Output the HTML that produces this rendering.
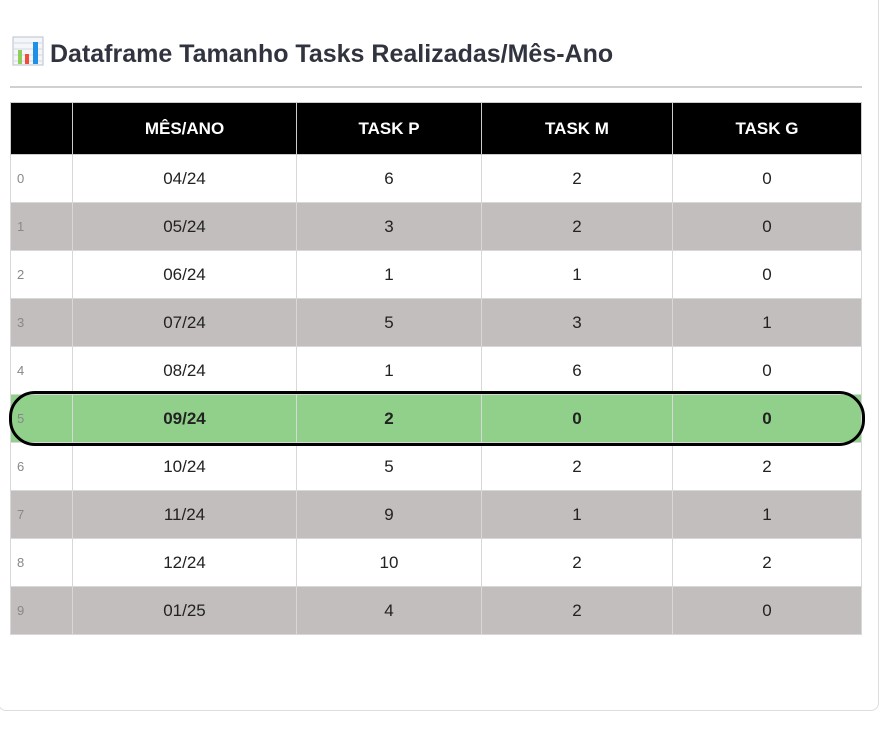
<!DOCTYPE html>
<html><head><style>
body{margin:0;background:#fff;width:892px;height:729px;overflow:hidden;font-family:"Liberation Sans",sans-serif;position:relative}
.card{position:absolute;left:-2px;top:-10px;width:879px;height:719px;border:1px solid #ddd;border-radius:8px;background:#fff}
h1{position:absolute;left:12px;top:36px;margin:0;font-size:25px;font-weight:bold;color:#31333f;letter-spacing:0px}
.hr{position:absolute;left:10px;top:86px;width:852px;height:2px;background:#d0d0d0}
table{position:absolute;left:10px;top:102px;border-collapse:collapse;width:851px;table-layout:fixed}
td,th{border:1px solid #d8d8d8;text-align:center;font-size:17px;color:#222;height:47px;padding:0}
th{background:#000;color:#fff;font-size:17px;font-weight:bold;height:51px;border-color:#ccc}
td.i{text-align:left;padding-left:6px;font-size:13px;color:#888}
tr.g td{background:#c2bebd}
tr.h td{background:#90d08a;font-weight:bold}
.oval{position:absolute;left:9px;top:391px;width:850px;height:49px;border:3px solid #000;border-radius:26px}
</style></head><body>
<div class="card"></div>
<h1><svg width="32" height="30" viewBox="0 0 32 30" style="vertical-align:-4px;margin-right:6px"><rect x="1" y="1" width="30" height="28" fill="#f4f6f9" stroke="#b8c2cc"/><g stroke="#d5dbe2"><line x1="1" y1="7" x2="31" y2="7"/><line x1="1" y1="13" x2="31" y2="13"/><line x1="1" y1="19" x2="31" y2="19"/><line x1="1" y1="25" x2="31" y2="25"/></g><rect x="6" y="14" width="4" height="14" fill="#8fce5a"/><rect x="13" y="18" width="4" height="10" fill="#f04d3a"/><rect x="21" y="6" width="5" height="22" fill="#1e90e8"/></svg>Dataframe Tamanho Tasks Realizadas/Mês-Ano</h1>
<div class="hr"></div>
<table>
<colgroup><col style="width:62px"><col style="width:224px"><col style="width:185px"><col style="width:191px"><col style="width:189px"></colgroup>
<tr><th></th><th>MÊS/ANO</th><th>TASK P</th><th>TASK M</th><th>TASK G</th></tr>
<tr><td class="i">0</td><td>04/24</td><td>6</td><td>2</td><td>0</td></tr>
<tr class="g"><td class="i">1</td><td>05/24</td><td>3</td><td>2</td><td>0</td></tr>
<tr><td class="i">2</td><td>06/24</td><td>1</td><td>1</td><td>0</td></tr>
<tr class="g"><td class="i">3</td><td>07/24</td><td>5</td><td>3</td><td>1</td></tr>
<tr><td class="i">4</td><td>08/24</td><td>1</td><td>6</td><td>0</td></tr>
<tr class="h"><td class="i" style="font-weight:normal">5</td><td>09/24</td><td>2</td><td>0</td><td>0</td></tr>
<tr><td class="i">6</td><td>10/24</td><td>5</td><td>2</td><td>2</td></tr>
<tr class="g"><td class="i">7</td><td>11/24</td><td>9</td><td>1</td><td>1</td></tr>
<tr><td class="i">8</td><td>12/24</td><td>10</td><td>2</td><td>2</td></tr>
<tr class="g"><td class="i">9</td><td>01/25</td><td>4</td><td>2</td><td>0</td></tr>
</table>
<div class="oval"></div>
</body></html>
